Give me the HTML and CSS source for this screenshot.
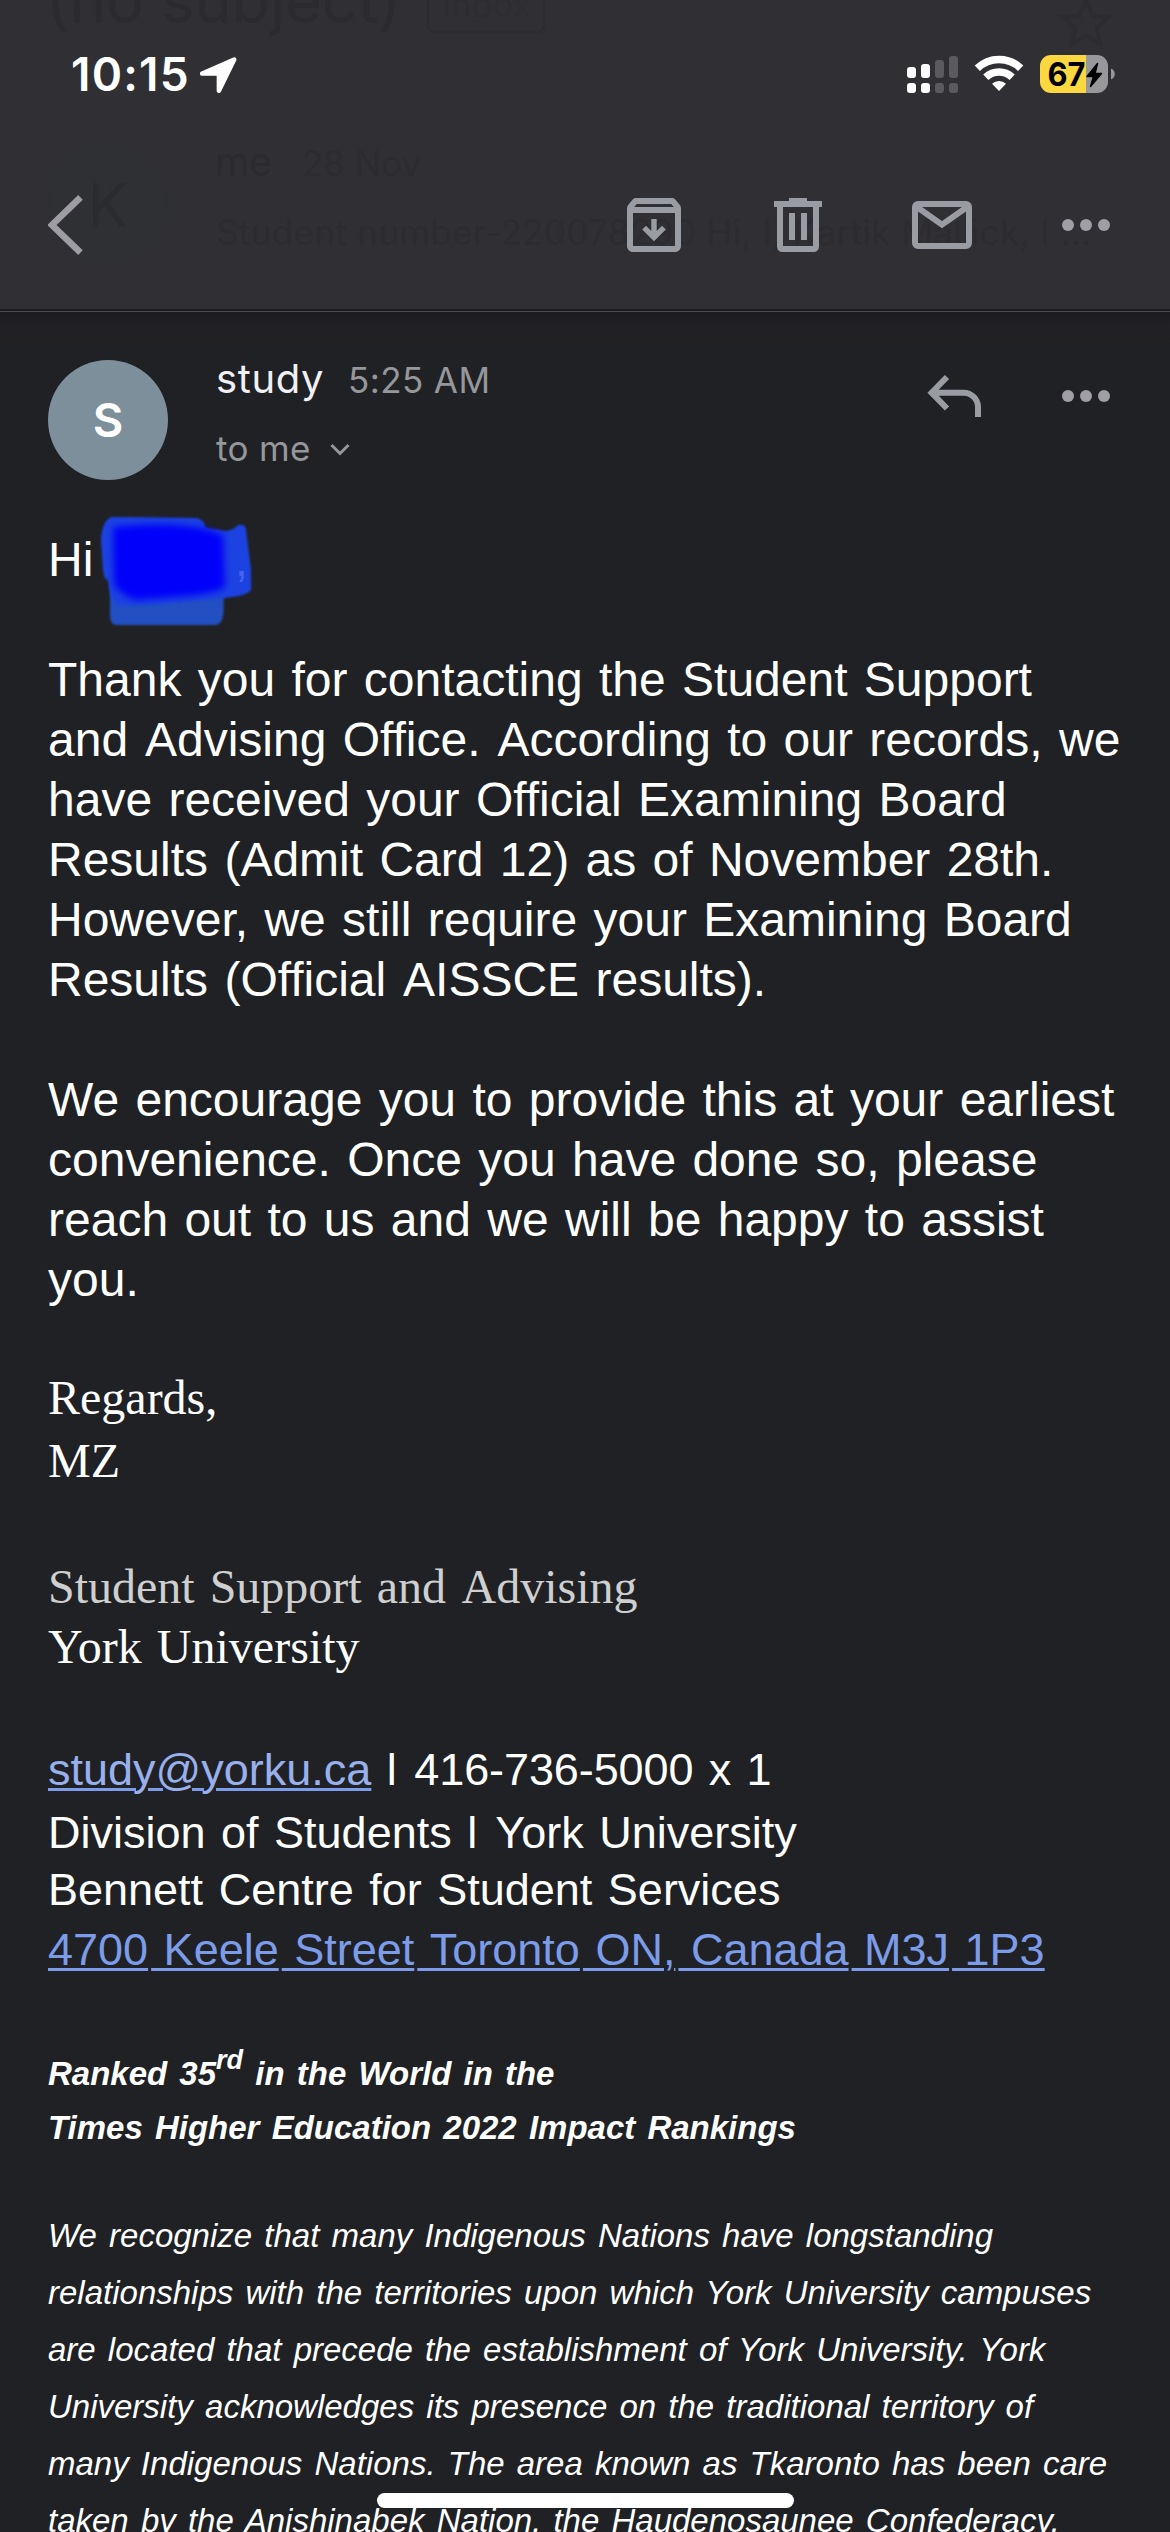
FILE: index.html
```html
<!DOCTYPE html>
<html lang="en">
<head>
<meta charset="utf-8">
<title>Mail</title>
<link rel="stylesheet" href="styles.css">
</head>
<body>
<header class="top">
  <div class="behind" aria-hidden="true">
    <span class="b-subject">(no subject)</span>
    <span class="b-inbox">Inbox</span>
    <svg class="b-star" viewBox="0 0 56 54" width="56" height="54"><path d="M28 5l6.500 15.500 16.500 1.500-12.500 11 3.700 16.500L28 40.500 13.800 49.500l3.700-16.500L5 22l16.500-1.500z" fill="none" stroke="currentColor" stroke-width="4"/></svg>
    <span class="b-avatar">K</span>
    <span class="b-name">me</span>
    <span class="b-date">28 Nov</span>
    <span class="b-snippet">Student number-220078290 Hi, I, Kartik Mallick, I ...</span>
  </div>
  <div class="status">
    <span class="clock">10:15</span>
    <svg width="38" height="48" viewBox="200 50 38 48"><path d="M234.200 59.500L218.900 90.800V73.600H202.200Z" fill="#fff" stroke="#fff" stroke-width="4.500" stroke-linejoin="round"/></svg>
    <div class="indicators">
      <svg width="51" height="48" viewBox="907 50 51 48">
        <g fill="#fff"><rect x="907" y="67" width="9" height="11" rx="3"/><rect x="921" y="64" width="9" height="14" rx="3"/><rect x="907" y="83" width="9" height="10" rx="3"/><rect x="921" y="83" width="9" height="10" rx="3"/></g>
        <g fill="#5b5a5e"><rect x="935" y="60" width="9" height="18" rx="3"/><rect x="949" y="56" width="9" height="22" rx="3"/><rect x="935" y="83" width="9" height="10" rx="3"/><rect x="949" y="83" width="9" height="10" rx="3"/></g>
      </svg>
      <svg width="50" height="48" viewBox="974 50 50 48">
        <g fill="none" stroke="#fff" stroke-width="7.500"><path d="M977.300 68.300a31.200 31.200 0 0 1 43.400 0"/><path d="M985.800 77.300a19.200 19.200 0 0 1 26.400 0"/></g>
        <path d="M999 91l-7-7.300a10.300 10.300 0 0 1 14 0z" fill="#fff"/>
      </svg>
      <svg width="75" height="48" viewBox="1040 50 75 48">
        <path d="M1086 55h11a11 11 0 0 1 11 11v16a11 11 0 0 1-11 11h-11z" fill="#98979c"/>
        <path d="M1086 55h-35a11 11 0 0 0-11 11v16a11 11 0 0 0 11 11h35z" fill="#fbd83f"/>
        <path d="M1111 68.500c5 2 5 9 0 11z" fill="#98979c"/>
        <text class="charge" x="1047.500" y="86" textLength="38" lengthAdjust="spacingAndGlyphs">67</text>
        <path d="M1097.500 63.500l-10.500 13h6.500L1090.500 86.500l11-13h-6.500z" fill="#000" stroke="#000" stroke-width="1.500" stroke-linejoin="round"/>
      </svg>
    </div>
  </div>
  <nav class="toolbar">
    <svg class="back" width="72" height="72" viewBox="48 189 72 72"><path d="M80.500 197.300L52 225l28.500 27.700" fill="none" stroke="#9e9da3" stroke-width="6.500"/></svg>
    <svg width="72" height="72" viewBox="0 0 24 24" fill="#9a9ca4"><path d="M20.540 5.230l-1.390-1.680C18.880 3.210 18.470 3 18 3H6c-.47 0-.88.21-1.160.55L3.460 5.230C3.170 5.570 3 6.020 3 6.500V19c0 1.100.9 2 2 2h14c1.100 0 2-.9 2-2V6.500c0-.48-.17-.93-.46-1.270zM6.240 5h11.520l.83 1H5.420l.82-1zM5 19V8h14v11H5z"/><path d="M12 10v5.500M8.700 12.900l3.300 3.250 3.300-3.250" fill="none" stroke="#9a9ca4" stroke-width="1.800"/></svg>
    <svg width="72" height="72" viewBox="0 0 24 24" fill="#9a9ca4"><path d="M9 3h6v1h5v2h-1v13.200a1.800 1.800 0 0 1-1.800 1.800H6.800A1.800 1.800 0 0 1 5 19.200V6H4V4h5zM7 6v13h10V6z" fill-rule="evenodd"/><path d="M9 8h2v9H9zM13 8h2v9h-2z"/></svg>
    <svg width="72" height="72" viewBox="0 0 24 24" fill="none" stroke="#9a9ca4" stroke-width="2"><rect x="3" y="5" width="18" height="14" rx="1"/><path d="M3.500 5.900L12 11.900l8.500-6"/></svg>
    <svg width="72" height="72" viewBox="0 0 24 24" fill="#a09fa5"><circle cx="6" cy="12" r="2"/><circle cx="12" cy="12" r="2"/><circle cx="18" cy="12" r="2"/></svg>
  </nav>
</header>
<main class="mail">
  <section class="sender">
    <div class="avatar">S</div>
    <div class="who">
      <div class="from"><span class="name">study</span><span class="time">5:25 AM</span></div>
      <div class="to">to me <svg width="20" height="14" viewBox="0 0 20 14"><path d="M1.500 2l8.500 8.500L18.500 2" fill="none" stroke="#96979b" stroke-width="3"/></svg></div>
    </div>
    <svg class="reply" width="72" height="72" viewBox="918 360 72 72"><path d="M932 392.700h31.500a14.500 14.500 0 0 1 14.500 14.500V417M947 377l-15.400 15.700 15.400 15.800" fill="none" stroke="#9a9ca4" stroke-width="6"/></svg>
    <svg width="72" height="72" viewBox="0 0 24 24" fill="#a09fa5"><circle cx="6" cy="12" r="2"/><circle cx="12" cy="12" r="2"/><circle cx="18" cy="12" r="2"/></svg>
  </section>
  <article class="body">
    <p class="greeting">Hi
      <svg class="scribble" width="180" height="130" viewBox="88 506 180 130">
        <defs>
          <filter id="soft" x="-20%" y="-20%" width="140%" height="140%"><feGaussianBlur stdDeviation="1.300"/></filter>
          <filter id="softer" x="-20%" y="-20%" width="140%" height="140%"><feGaussianBlur stdDeviation="3.500"/></filter>
        </defs>
        <path d="M110 580h114l-.5 32q-1 13-9 13H117q-7 0-7-10z" fill="#2350c2" filter="url(#soft)"/>
        <path d="M112 517l85 1q7 2 9 10l20 3q8-1 12-6 8-1 8 5l5 40v20q-4 6-28 8l-60 6-45 2q-9-8-10-26-4 0-5-10l-2-30q1-20 11-23z" fill="#1e43e2" filter="url(#soft)"/>
        <path d="M113 527q54-6 92 2l18 6 2 52q-12 7-42 9l-46 4q-20-6-23-18z" fill="#0000fb" filter="url(#softer)"/>
        <text class="comma" x="235" y="576">,</text>
      </svg>
    </p>
    <p class="para">Thank you for contacting the Student Support<br>and <span class="cap">Advising</span> Office. <span class="cap">According</span> to our records, we<br>have received your Official Examining Board<br>Results (Admit Card 12) as of November 28th.<br>However, we still require your Examining Board<br>Results (Official <span class="cap">AISSCE</span> results).</p>
    <p class="para">We encourage you to provide this at your earliest<br>convenience. Once you have done so, please<br>reach out to us and we will be happy to assist<br>you.</p>
    <p class="regards">Regards,<br>MZ</p>
    <p class="office"><span class="dim">Student Support and <span class="cap">Advising</span></span><br>York University</p>
    <div class="contact">
      <div class="phone"><a class="email">study@yorku.ca</a> l <span class="number">416-736-5000 x 1</span></div>
      <div class="tight">Division of Students l <span class="york">York</span> University</div>
      <div class="tight">Bennett Centre for Student Services</div>
      <div class="street"><a>4700</a><a>&nbsp;Keele</a><a>&nbsp;Street</a><a>&nbsp;Toronto</a><a>&nbsp;ON,</a><a>&nbsp;Canada</a><a>&nbsp;M3J</a><a>&nbsp;1P3</a></div>
    </div>
    <p class="rank">Ranked 35<sup>rd</sup> in the World in the<br>Times Higher Education 2022 Impact Rankings</p>
    <p class="land">We recognize that many Indigenous Nations have longstanding<br>relationships with the territories upon which York University campuses<br>are located that precede the establishment of York University. York<br>University acknowledges its presence on the traditional territory of<br>many Indigenous Nations. The area known as Tkaronto has been care<br>taken by the Anishinabek Nation, the Haudenosaunee Confederacy,</p>
  </article>
</main>
<div class="home-bar"></div>
</body>
</html>
```
FILE: styles.css
```css
* { box-sizing: border-box; }
html { background: #202124; }
body {
  margin: 0;
  width: 1170px;
  height: 2532px;
  overflow: hidden;
  position: relative;
  background: #202124;
  color: #fff;
  font-family: "Liberation Sans", sans-serif;
}
p { margin: 0; }
svg { display: block; flex: none; }

.top {
  position: relative;
  height: 312px;
  background: #302f34;
  border-bottom: 1px solid #4d4c51;
  box-shadow: inset 0 -2px #1c1b1f;
  font-family: Inter, sans-serif;
}

/* message content showing faintly through the translucent bar */
.behind { position: absolute; inset: 0; overflow: hidden; color: #2b2a2f; font-size: 35px; }
.behind > * { position: absolute; line-height: 48px; white-space: nowrap; }
.b-subject { left: 46px; top: -24px; font-size: 63px; letter-spacing: -.1px; }
.b-inbox { left: 427px; top: -24px; width: 118px; height: 57px; padding: 4px 13px; border: 2px solid #2c2b30; border-radius: 8px; line-height: 44px; letter-spacing: -.3px; color: #2d2c31; }
.b-star { left: 1058px; top: -5px; color: #2c2b30; }
.b-avatar { left: 48px; top: 144px; width: 120px; height: 120px; border-radius: 50%; background: #2e3034; text-align: center; font-size: 60px; line-height: 122px; color: #2a2b2f; }
.b-name { left: 215px; top: 138px; font-size: 39px; }
.b-date { left: 302px; top: 139px; color: #2c2b30; }
.b-snippet { left: 216px; top: 208px; letter-spacing: .37px; color: #2c2b30; }

.status {
  position: relative;
  display: flex;
  align-items: flex-start;
  height: 189px;
  padding: 50px 55px 0 71px;
}
.clock { width: 129px; font-size: 46px; line-height: 48px; font-weight: 600; letter-spacing: 1.2px; }
.indicators { display: flex; gap: 16px; margin-left: auto; }
.charge { font: 700 32.500px Inter, sans-serif; fill: #000; }
.toolbar { position: relative; display: flex; gap: 72px; padding: 0 48px; }
.back { margin-right: auto; }

.mail { background: linear-gradient(#1b1a1e, #212024 14px, #202124 40px); padding: 0 48px; }
.sender {
  display: flex;
  align-items: flex-start;
  height: 218px;
  padding-top: 48px;
  font-family: Inter, sans-serif;
}
.avatar {
  width: 120px;
  height: 120px;
  border-radius: 50%;
  background: #7c8f9b;
  text-align: center;
  font-size: 47px;
  line-height: 120px;
  font-weight: 600;
}
.who { margin: -5px auto 0 48px; color: #96979b; font-size: 35px; line-height: 48px; }
.name { font-size: 40px; color: #f1f0f4; letter-spacing: .6px; }
.time { margin-left: 24px; letter-spacing: .4px; }
.to { display: flex; align-items: center; gap: 19px; margin-top: 20px; letter-spacing: .35px; }
.to svg { margin-top: 3px; }
.reply { margin-right: 60px; }

.body { word-spacing: 3px; white-space: nowrap; }
.greeting, .para { font-size: 48px; line-height: 60px; }
.greeting { position: relative; }
.para { margin-top: 60px; }
.scribble { position: absolute; left: 40px; top: -24px; }
.comma { font: 46px "Liberation Sans", sans-serif; fill: #4a63ee; }
.cap { margin-left: .500px; }
.york { margin-left: 2.600px; }

.regards, .office { font-family: "Liberation Serif", serif; font-size: 48px; }
.regards { margin-top: 56px; line-height: 63px; }
.office { margin-top: 65px; line-height: 60px; }
.dim { color: #cfcfd0; }

.contact { margin-top: 63px; font-size: 45px; line-height: 60px; }
.contact a {
  color: #7c9ce9;
  text-decoration: underline;
  text-decoration-thickness: 3px;
  text-underline-offset: 3px;
}
.contact .email { color: #98b0ec; text-decoration-color: #7c9ce9; }
.number { margin-left: 2px; letter-spacing: -.1px; }
.tight { line-height: 57px; }
.phone { margin-bottom: 4px; }
.street { margin-top: 2px; word-spacing: 0; }
.street a + a { margin-left: 3px; }

.rank { margin-top: 67px; font: italic bold 33px/54px "Liberation Sans", sans-serif; }
.rank sup { font-size: 27px; line-height: 0; vertical-align: 16px; }
.land { margin-top: 53px; font-style: italic; font-size: 33px; line-height: 56.900px; }

.home-bar {
  position: absolute;
  left: 377px;
  top: 2493px;
  width: 417px;
  height: 15px;
  border-radius: 8px;
  background: #fff;
}
```
